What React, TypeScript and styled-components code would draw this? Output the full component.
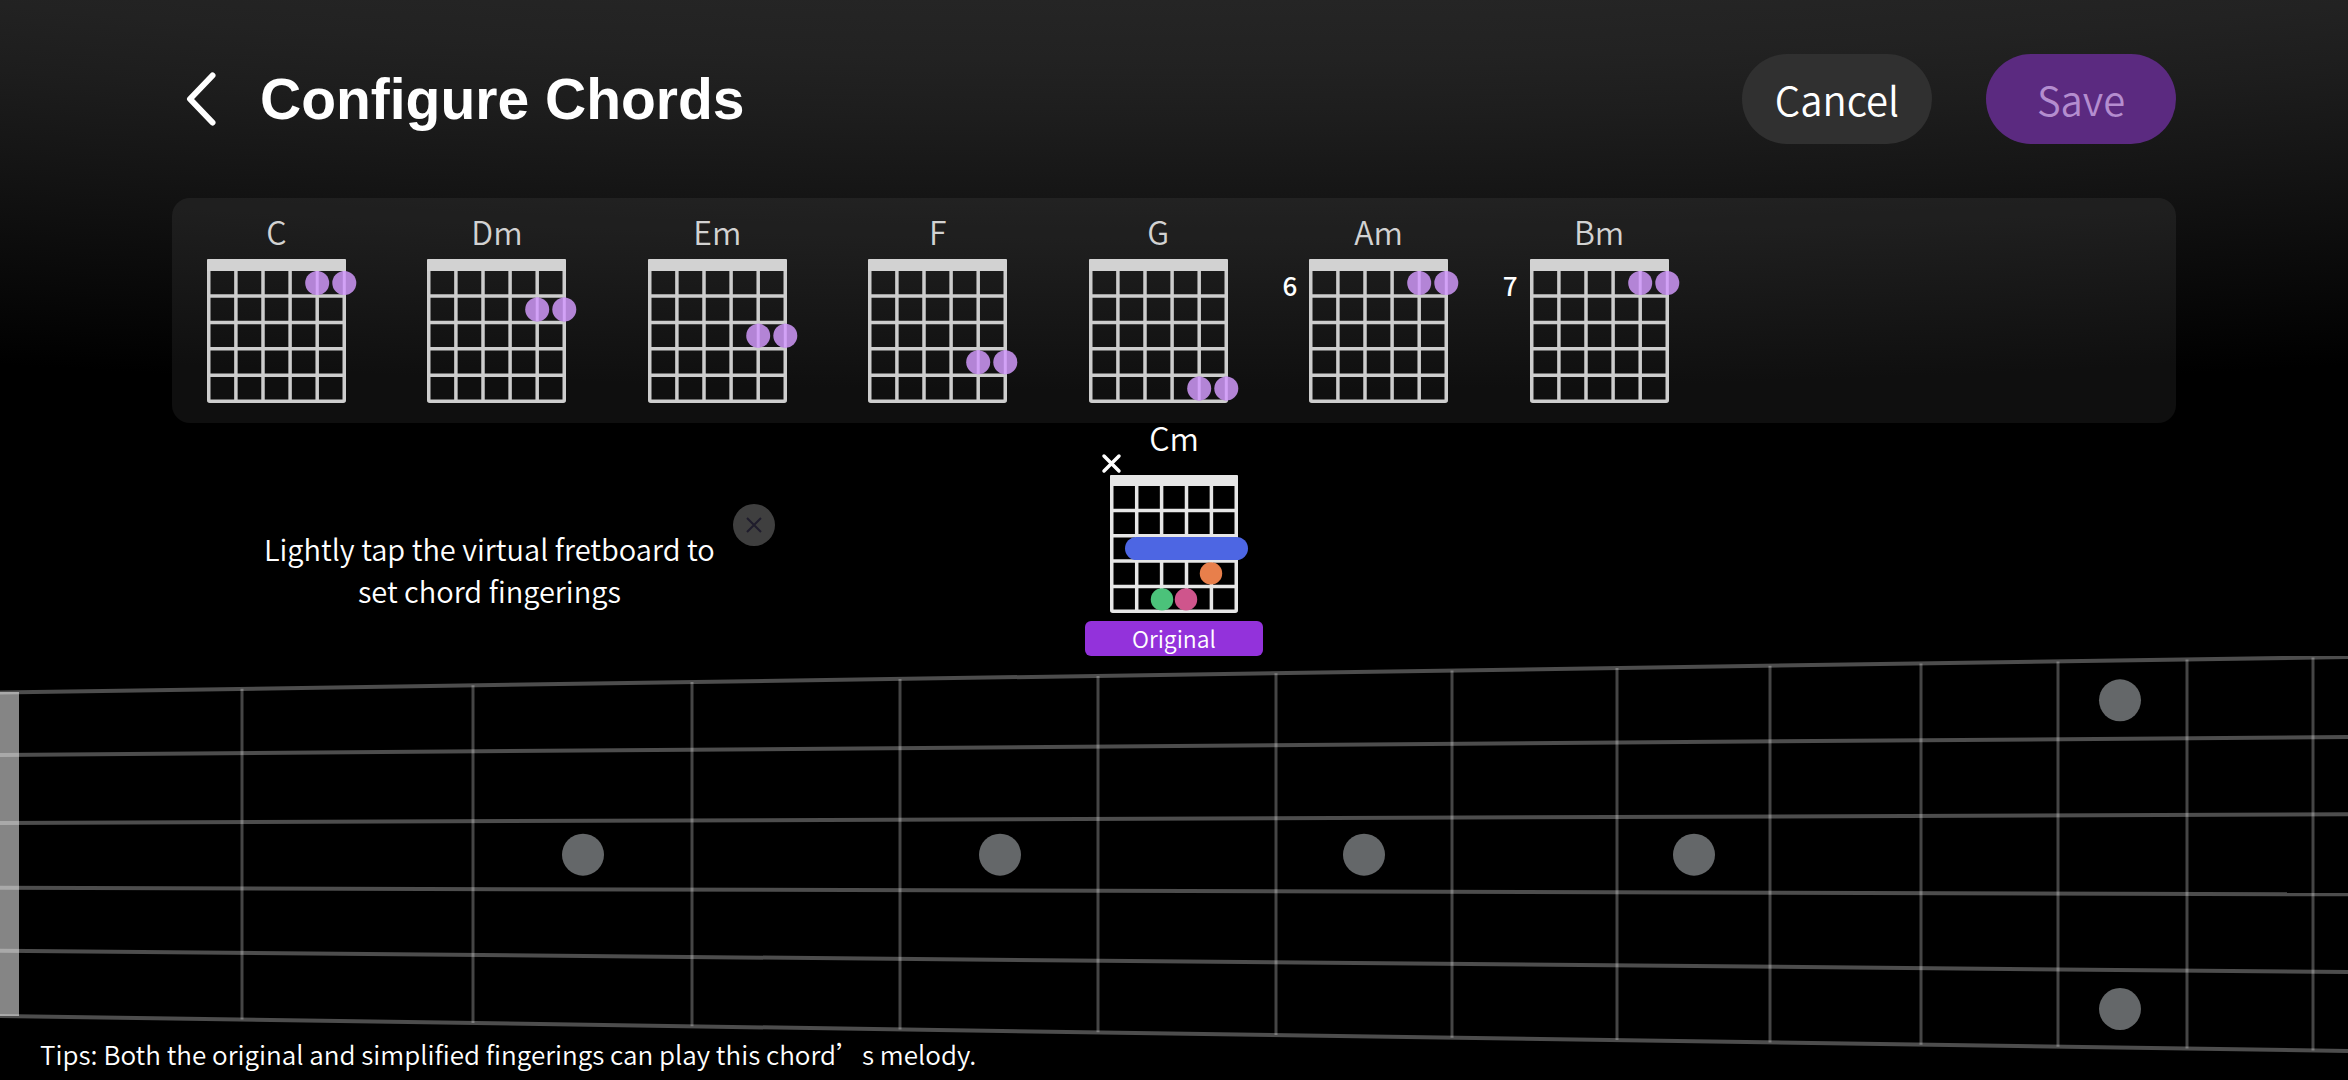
import React from "react";
import styled, { createGlobalStyle } from "styled-components";

const GlobalStyle = createGlobalStyle`
  *, *::before, *::after { box-sizing: border-box; }
  body {
    margin: 0;
    background: #000;
    color: #fff;
    font-family: "Noto Sans CJK SC", "Noto Sans", sans-serif;
    font-weight: 350;
  }
  button { font: inherit; color: inherit; border: 0; padding: 0; background: none; cursor: pointer; }
  h1, h2, p, ul { margin: 0; padding: 0; }
  svg { display: block; }
`;

const Page = styled.main`
  min-height: 100vh;
  display: flex;
  flex-direction: column;
  overflow: hidden;
  background: radial-gradient(
    190% 1000px at 50% -600px,
    #252525 60%,
    #222 66%,
    #1d1d1d 72%,
    #161616 79%,
    #000 100%
  );
`;

const TopBar = styled.header`
  display: flex;
  align-items: center;
  gap: 54px;
  padding: 54px 172px;
`;

const BackButton = styled.button`
  display: flex;
  padding: 0 0 0 12px;
`;

const Heading = styled.div`
  flex: 1;
  display: flex;
  align-items: center;
  gap: 40px;
`;

const Title = styled.h1`
  font: bold 57px/64px "Liberation Sans", Arial, sans-serif;
`;

const PillButton = styled.button<{ $primary?: boolean }>`
  width: 190px;
  height: 90px;
  border-radius: 45px;
  font-size: 40px;
  line-height: 60px;
  background: ${(p) => (p.$primary ? "#5b2a80" : "#303030")};
  color: ${(p) => (p.$primary ? "#b48dcf" : "#fff")};
`;

const ChordList = styled.ul`
  list-style: none;
  display: grid;
  grid-template-columns: repeat(9, 1fr);
  margin: 0 172px;
  padding: 11px 20px 20px 0;
  border-radius: 18px;
  background: rgba(255, 255, 255, 0.06);
`;

const ChordItem = styled.li`
  display: grid;
  grid-template-columns: 35px 139px;
  color: #d2d2d2;
`;

const ChordName = styled.h2`
  grid-column: 2;
  margin-bottom: 6px;
  text-align: center;
  font-size: 32px;
  font-weight: 350;
  line-height: 44px;
`;

const FretNumber = styled.span`
  padding: 10px 12px 0 0;
  text-align: right;
  font-size: 26px;
  font-weight: 500;
  line-height: 32px;
  color: #fff;
`;

const Diagram = styled.svg`
  grid-column: 2;
  overflow: visible;
`;

const Workspace = styled.section`
  display: grid;
  grid-template-columns: 1fr auto 1fr;
  padding: 0 172px;
`;

const Hint = styled.div`
  display: flex;
  align-items: flex-start;
  gap: 18px;
  padding: 81px 0 0 92px;
`;

const HintText = styled.p`
  padding-top: 23px;
  text-align: center;
  font-size: 29px;
  line-height: 42px;
`;

const DismissButton = styled.button`
  display: flex;
  border-radius: 50%;
`;

const CurrentChord = styled.div`
  display: flex;
  flex-direction: column;
  align-items: center;
`;

const CurrentName = styled(ChordName)`
  margin: 0;
  line-height: 28px;
`;

const Variant = styled.button`
  width: 178px;
  height: 35px;
  margin-top: 8px;
  border-radius: 6px;
  background: #9332db;
  font-size: 23px;
  line-height: 35px;
`;

const Stage = styled.section`
  display: grid;
  align-items: end;
`;

const Fretboard = styled.svg`
  grid-area: 1 / 1;
  width: 100%;
  height: auto;
`;

const Tips = styled.p`
  grid-area: 1 / 1;
  display: flex;
  gap: 6px;
  padding: 0 40px 6px;
  font-size: 26px;
  line-height: 40px;
`;

type Chord = { name: string; fret: number; start?: number };

const chords: Chord[] = [
  { name: "C", fret: 1 },
  { name: "Dm", fret: 2 },
  { name: "Em", fret: 3 },
  { name: "F", fret: 4 },
  { name: "G", fret: 5 },
  { name: "Am", fret: 1, start: 6 },
  { name: "Bm", fret: 1, start: 7 },
];

const inner = [1, 2, 3, 4];

function ChordDiagram({ fret }: { fret: number }) {
  const y = 24 + (fret - 1) * 26.4;
  return (
    <Diagram width="139" height="144" viewBox="0 0 139 144" aria-hidden="true">
      <g stroke="#cdcdcd" strokeWidth="3.5">
        {inner.map((i) => (
          <path key={i} d={`M${1.8 + i * 27.1} 6V142`} />
        ))}
        {inner.map((i) => (
          <path key={i} d={`M2 ${10.6 + i * 26.4}H138`} />
        ))}
        <rect x="1.750" y="1.750" width="135.500" height="140.500" rx="1" fill="none" />
      </g>
      <rect width="139" height="12" rx="1" fill="#d2d2d2" />
      {[4, 5].map((s) => (
        <g key={s}>
          <circle cx={1.8 + s * 27.1} cy={y} r="12" fill="#b384d6" />
          <path d={`M${1.8 + s * 27.1} ${y - 12}v24`} stroke="#d2a2f6" strokeWidth="3" />
        </g>
      ))}
    </Diagram>
  );
}

function CurrentDiagram() {
  return (
    <Diagram width="140" height="162" viewBox="0 0 140 162" aria-hidden="true">
      <path d="M0 5l15 15M15 5L0 20" stroke="#fff" strokeWidth="3.500" strokeLinecap="round" />
      <g stroke="#e6e6e6" strokeWidth="3.500">
        {inner.map((i) => (
          <path key={i} d={`M${7.8 + i * 24.9} 30V160`} />
        ))}
        {inner.map((i) => (
          <path key={i} d={`M7 ${34.2 + i * 25.3}H134`} />
        ))}
        <rect x="7.750" y="25.750" width="124.500" height="134.500" rx="1" fill="none" />
      </g>
      <rect x="6" y="24" width="128" height="11" rx="1" fill="#e6e6e6" />
      <rect x="21" y="86" width="123" height="23" rx="11.500" fill="#4d66e3" />
      <circle cx="107" cy="122.400" r="11.200" fill="#e87f4b" />
      <circle cx="58" cy="148.400" r="11.200" fill="#4bc27a" />
      <circle cx="82" cy="148.400" r="11.200" fill="#cf558c" />
    </Diagram>
  );
}

const strings = [
  [36.5, 1],
  [99, 81],
  [167, 158.3],
  [231.7, 238.3],
  [294.7, 316],
  [360, 395],
];
const frets = [242, 473, 692, 900, 1098, 1276, 1452, 1617, 1770, 1921, 2058, 2187, 2313];
const inlays = [
  [583, 198.7],
  [1000, 198.7],
  [1364, 198.7],
  [1694, 198.7],
  [2120, 44.3],
  [2120, 353],
];

function Neck() {
  const at = (s: number[], x: number) => s[0] + ((s[1] - s[0]) * x) / 2348;
  return (
    <Fretboard viewBox="0 0 2348 424" role="img" aria-label="Virtual fretboard">
      <path d="M0 36H19V360H0z" fill="#fff" fillOpacity="0.52" />
      <g stroke="#fff" strokeOpacity="0.3" strokeWidth="4">
        {strings.map((s, i) => (
          <path key={i} d={`M0 ${s[0]}L2348 ${s[1]}`} />
        ))}
      </g>
      <g stroke="#fff" strokeOpacity="0.27" strokeWidth="3">
        {frets.map((x) => (
          <path key={x} d={`M${x} ${at(strings[0], x)}V${at(strings[5], x)}`} />
        ))}
      </g>
      {inlays.map(([x, y]) => (
        <circle key={`${x}-${y}`} cx={x} cy={y} r="21" fill="#646769" />
      ))}
    </Fretboard>
  );
}

export default function App() {
  return (
    <>
      <GlobalStyle />
      <Page>
        <TopBar>
          <Heading>
            <BackButton aria-label="Back">
              <svg width="36" height="60" viewBox="0 0 36 60" fill="none">
                <path d="M28.500 6.500L6 30L28.500 53.500" stroke="#fff" strokeWidth="6" strokeLinecap="round" strokeLinejoin="round" />
              </svg>
            </BackButton>
            <Title>Configure Chords</Title>
          </Heading>
          <PillButton>Cancel</PillButton>
          <PillButton $primary>Save</PillButton>
        </TopBar>

        <ChordList>
          {chords.map((c) => (
            <ChordItem key={c.name}>
              <ChordName>{c.name}</ChordName>
              {c.start && <FretNumber>{c.start}</FretNumber>}
              <ChordDiagram fret={c.fret} />
            </ChordItem>
          ))}
        </ChordList>

        <Workspace>
          <Hint>
            <HintText>
              Lightly tap the virtual fretboard to
              <br />
              set chord fingerings
            </HintText>
            <DismissButton aria-label="Dismiss hint">
              <svg width="42" height="42" viewBox="0 0 42 42">
                <circle cx="21" cy="21" r="21" fill="#3f3f3f" />
                <path d="M14 14l14 14M28 14L14 28" stroke="#1f1c2c" strokeWidth="2" />
              </svg>
            </DismissButton>
          </Hint>
          <CurrentChord>
            <CurrentName>Cm</CurrentName>
            <CurrentDiagram />
            <Variant>Original</Variant>
          </CurrentChord>
        </Workspace>

        <Stage>
          <Neck />
          <Tips>
            <span>Tips:</span>
            <span>Both the original and simplified fingerings can play this chord’s melody.</span>
          </Tips>
        </Stage>
      </Page>
    </>
  );
}
